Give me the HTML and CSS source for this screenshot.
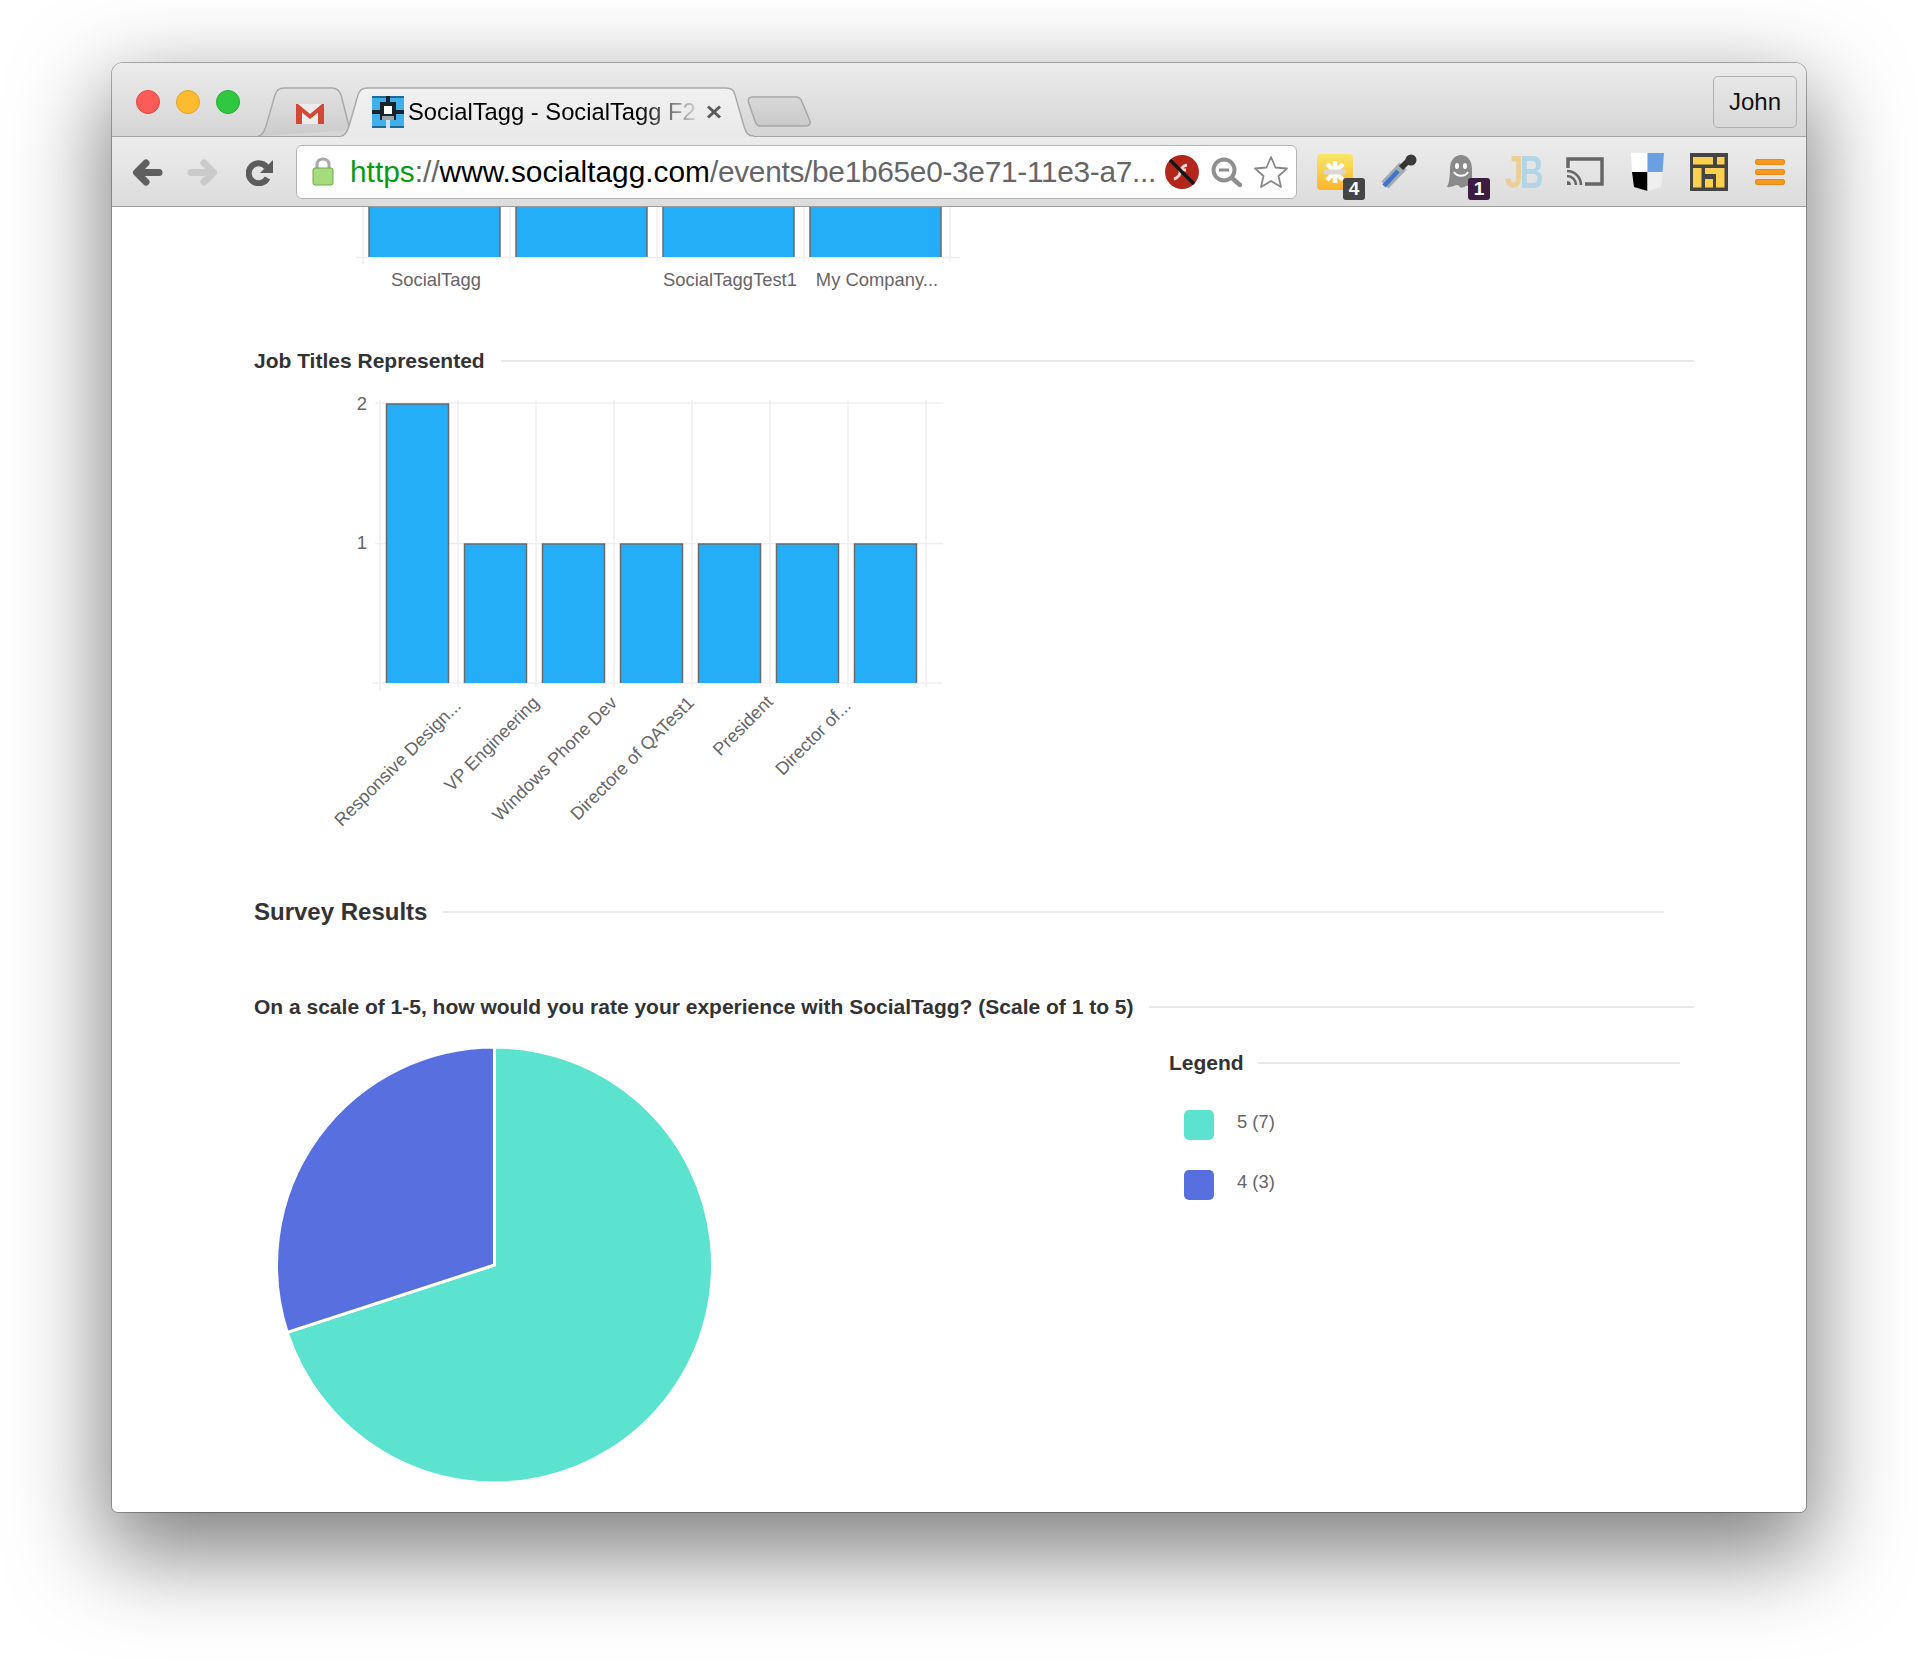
FILE: index.html
```html
<!DOCTYPE html>
<html>
<head>
<title>SocialTagg - SocialTagg F2</title>
<link rel="stylesheet" href="styles.css">
</head>
<body>
<div class="window">

<div class="titlebar">
  <div class="lights">
    <span class="light red"></span>
    <span class="light yellow"></span>
    <span class="light green"></span>
  </div>
  <div class="tab tab-mail">
    <svg class="tab-shape" viewBox="0 0 92 51" preserveAspectRatio="none"><defs><linearGradient id="tg1" x1="0" y1="0" x2="0" y2="1"><stop offset="0" stop-color="#e2e2e2"/><stop offset="1" stop-color="#cbcbcb"/></linearGradient></defs><path d="M0 50C4 50 6 46 8 40L17 8C18.500 3 21 1 26 1H74C78 1 81 3 83 8L92 44" fill="url(#tg1)" stroke="#a9a9a9" stroke-width="1.500"/></svg>
    <svg class="gmail" width="28" height="20" viewBox="0 0 28 20">
      <rect x="0" y="0" width="28" height="20" fill="#ececec"/>
      <path d="M0 20V0H2L14 10 26 0H28V20H22V8.500L14 15 6 8.500V20Z" fill="#d14836"/>
    </svg>
  </div>
  <div class="tab tab-active">
    <svg class="tab-shape" viewBox="0 0 413 51" preserveAspectRatio="none"><defs><linearGradient id="tg2" x1="0" y1="0" x2="0" y2="1"><stop offset="0" stop-color="#f1f1f1"/><stop offset="1" stop-color="#e9e9e9"/></linearGradient></defs><path d="M0 50C4 50 6 46 8 40L17 8C18.500 3 21 1 26 1H385C390 1 393 3 394 8L403 40C405 47 407 50 413 50V51H0Z" fill="url(#tg2)"/><path d="M0 50C4 50 6 46 8 40L17 8C18.500 3 21 1 26 1H385C390 1 393 3 394 8L403 40C405 47 407 50 413 50" fill="none" stroke="#a9a9a9" stroke-width="1.500"/></svg>
    <svg class="favicon" width="32" height="32" viewBox="0 0 16 16" shape-rendering="crispEdges">
      <rect width="16" height="16" fill="#3fb0ea"/>
      <rect x="0" y="0" width="16" height="1" fill="#1d6b94"/>
      <rect x="0" y="15" width="16" height="1" fill="#1d6b94"/>
      <rect x="7" y="0" width="2" height="4" fill="#15232b"/>
      <rect x="0" y="7" width="4" height="2" fill="#15232b"/>
      <rect x="12" y="7" width="4" height="2" fill="#15232b"/>
      <rect x="4" y="3" width="8" height="9" fill="#15232b"/>
      <rect x="6" y="5" width="4" height="4" fill="#fff"/>
      <rect x="5" y="10" width="6" height="2" fill="#9aa6ac"/>
      <rect x="7" y="12" width="2" height="4" fill="#cfe4ef"/>
    </svg>
    <span class="tab-title">SocialTagg - SocialTagg F2</span>
    <svg class="tab-close" width="16" height="14" viewBox="0 0 16 14"><path d="M2 1.500L14 12.500M14 1.500L2 12.500" stroke="#5a5a5a" stroke-width="3"/></svg>
  </div>
  <div class="tab-new">
    <svg width="64" height="31" viewBox="0 0 64 31"><defs><linearGradient id="tg3" x1="0" y1="0" x2="0" y2="1"><stop offset="0" stop-color="#d9d9d9"/><stop offset="1" stop-color="#c9c9c9"/></linearGradient></defs><path d="M5 1H49C52 1 54 3 55 6L63 25C64 28 62 30 59 30H13C10 30 9 28 8 25L1.500 6C1 3 2 1 5 1Z" fill="url(#tg3)" stroke="#a6a6a6" stroke-width="1.500"/></svg>
  </div>
  <div class="user">John</div>
</div>

<div class="toolbar">
  <svg class="nav nav-back" width="31" height="27" viewBox="0 0 31 27"><path d="M27 13.500H6M14 4L4.500 13.500 14 23" fill="none" stroke="#5f5f5f" stroke-width="7" stroke-linecap="round" stroke-linejoin="round"/></svg>
  <svg class="nav nav-fwd" width="31" height="27" viewBox="0 0 31 27"><path d="M4 13.500H25M17 4L26.500 13.500 17 23" fill="none" stroke="#cacaca" stroke-width="7" stroke-linecap="round" stroke-linejoin="round"/></svg>
  <svg class="nav nav-reload" width="28" height="27" viewBox="0 0 28 27"><path d="M20.500 8A10 10 0 1 0 21.500 19" fill="none" stroke="#5c5c5c" stroke-width="6"/><path d="M27 1V14H14Z" fill="#5c5c5c"/></svg>

  <div class="urlbar">
    <svg class="lock" width="22" height="29" viewBox="0 0 22 29"><path d="M5 12V7.500C5 4 7.500 2 11 2S17 4 17 7.500V12" fill="none" stroke="#a8a8a8" stroke-width="3"/><rect x="1" y="11" width="20" height="17" rx="2" fill="#a6dc7c" stroke="#6fa850"/></svg>
    <span class="url"><span class="url-scheme">https</span><span class="url-dim">://</span><span class="url-host">www.socialtagg.com</span><span class="url-dim url-path">/events/be1b65e0-3e71-11e3-a7...</span></span>
    <svg class="url-icon" width="34" height="34" viewBox="0 0 34 34"><circle cx="17" cy="17" r="17" fill="#b3261c"/><path d="M22 10C17 11 16 14 15 18S12 23 9 24M13 15H21" fill="none" stroke="#f1d7d4" stroke-width="3"/><path d="M5 5L29 29" stroke="#161616" stroke-width="3.500"/></svg>
    <svg class="url-icon url-zoom" width="31" height="30" viewBox="0 0 31 30"><circle cx="13" cy="13" r="10.500" fill="none" stroke="#8f8f8f" stroke-width="4"/><path d="M8 13H18" stroke="#8f8f8f" stroke-width="3"/><path d="M21 21L29 28" stroke="#8f8f8f" stroke-width="4.500" stroke-linecap="round"/></svg>
    <svg class="url-icon url-star" width="36" height="34" viewBox="0 0 36 34"><path d="M18 2L22.500 12.500 34 13.500 25.500 21 28 32 18 26 8 32 10.500 21 2 13.500 13.500 12.500Z" fill="#fff" stroke="#8a8a8a" stroke-width="1.800" stroke-linejoin="round"/></svg>
  </div>

  <div class="exts">
    <div class="ext">
      <svg width="36" height="36" viewBox="0 0 36 36"><defs><linearGradient id="yl" x1="0" y1="0" x2="0" y2="1"><stop offset="0" stop-color="#f6e768"/><stop offset="1" stop-color="#fdb42c"/></linearGradient></defs><rect width="36" height="36" rx="4" fill="url(#yl)"/><path d="M18 7V29M10 10L26 26M26 10L10 26" stroke="#fff" stroke-width="4.500"/><path d="M7 18H29" stroke="#d8d8d0" stroke-width="5"/></svg>
      <span class="badge badge-dark">4</span>
    </div>
    <div class="ext">
      <svg width="38" height="36" viewBox="0 0 38 36"><path d="M6 31L24 12" stroke="#a4aab2" stroke-width="10"/><path d="M5 32L19 17" stroke="#3f74cc" stroke-width="4.500"/><path d="M22 14L30 6" stroke="#333" stroke-width="6"/><circle cx="32" cy="6" r="5.500" fill="#3a3a3a"/></svg>
    </div>
    <div class="ext">
      <svg width="27" height="34" viewBox="0 0 27 34"><path d="M3 14C3 5 8 0 14 0S25 5 25 14V27L27 32C24 34 21 30 19 31S14 34 12 31 6 33 0 32C2 28 3 22 3 14Z" fill="#8a8a8a"/><ellipse cx="10" cy="11" rx="2" ry="3" fill="#fff"/><ellipse cx="18" cy="11" rx="2" ry="3" fill="#fff"/><path d="M7 17C10 22 18 22 21 17" fill="none" stroke="#fff" stroke-width="2"/></svg>
      <span class="badge badge-plum">1</span>
    </div>
    <div class="ext"><span class="jb"><span class="jb-j">J</span><span class="jb-b">B</span></span></div>
    <div class="ext">
      <svg width="38" height="29" viewBox="0 0 38 29"><path d="M2 11V2H36V27H19" fill="none" stroke="#666" stroke-width="3.500"/><path d="M1 14A14 14 0 0 1 15 28M1 19A9 9 0 0 1 10 28" fill="none" stroke="#666" stroke-width="2.500"/><path d="M1 24A4 4 0 0 1 5 28H1Z" fill="#666"/></svg>
    </div>
    <div class="ext">
      <svg width="33" height="38" viewBox="0 0 33 38"><path d="M0 0H16.500V19H1Z" fill="#fff"/><path d="M16.500 0H33L31.500 19H16.500Z" fill="#6a9fe2"/><path d="M1 19H16.500V38L3 34Z" fill="#000"/><path d="M16.500 19H31.500L30 34 16.500 38Z" fill="#efefef"/></svg>
    </div>
    <div class="ext ext-hive">
      <svg width="38" height="38" viewBox="0 0 38 38"><rect width="38" height="38" fill="#444"/><g fill="#fbd04f"><rect x="3" y="4" width="20" height="7.500"/><rect x="27" y="4" width="7.500" height="7.500"/><rect x="3" y="15" width="8.500" height="19.500"/><rect x="15" y="15" width="19.500" height="6"/><rect x="15" y="26" width="8" height="8.500"/><rect x="26" y="21" width="8.500" height="13.500"/></g></svg>
    </div>
    <div class="ext ext-menu">
      <div class="menu"><span></span><span></span><span></span></div>
    </div>
  </div>
</div>

<div class="page">
  <svg class="chart chart-top" width="610" height="90" viewBox="355 207 610 90">
    <g class="grid">
      <path d="M363 207V264M510 207V262M657 207V262M804 207V262M950 207V262"/>
      <path d="M356 257.500H960"/>
    </g>
    <path class="bar" d="M369 257V200H500V257"/>
    <path class="bar" d="M516 257V200H647V257"/>
    <path class="bar" d="M663 257V200H794V257"/>
    <path class="bar" d="M810 257V200H941V257"/>
    <text class="tick" x="436" y="286" text-anchor="middle">SocialTagg</text>
    <text class="tick" x="730" y="286" text-anchor="middle">SocialTaggTest1</text>
    <text class="tick" x="877" y="286" text-anchor="middle">My Company...</text>
  </svg>

  <h3 class="rule-head job-head"><span>Job Titles Represented</span></h3>

  <svg class="chart chart-jobs" width="650" height="440" viewBox="320 395 650 440">
    <g class="grid">
      <path d="M380 400V690M458 400V687M536 400V687M614 400V687M692 400V687M770 400V687M848 400V687M926 400V687"/>
      <path d="M375 403H943M375 543.500H943M372 683H942"/>
    </g>
    <path class="bar" d="M386.500 683V404H448.500V683"/>
    <path class="bar" d="M464.500 683V544H526.500V683"/>
    <path class="bar" d="M542.500 683V544H604.500V683"/>
    <path class="bar" d="M620.500 683V544H682.500V683"/>
    <path class="bar" d="M698.500 683V544H760.500V683"/>
    <path class="bar" d="M776.500 683V544H838.500V683"/>
    <path class="bar" d="M854.500 683V544H916.500V683"/>
    <text class="tick" x="367" y="410" text-anchor="end">2</text>
    <text class="tick" x="367" y="549" text-anchor="end">1</text>
    <text class="tick tick-slant" transform="translate(462 707) rotate(-45)" text-anchor="end">Responsive Design...</text>
    <text class="tick tick-slant" transform="translate(540 704) rotate(-45)" text-anchor="end">VP Engineering</text>
    <text class="tick tick-slant" transform="translate(618 704) rotate(-45)" text-anchor="end">Windows Phone Dev</text>
    <text class="tick tick-slant" transform="translate(695 704) rotate(-45)" text-anchor="end">Directore of QATest1</text>
    <text class="tick tick-slant" transform="translate(774 703) rotate(-45)" text-anchor="end">President</text>
    <text class="tick tick-slant" transform="translate(852 707) rotate(-45)" text-anchor="end">Director of...</text>
  </svg>

  <h2 class="rule-head survey-head"><span>Survey Results</span></h2>

  <h3 class="rule-head question-head"><span>On a scale of 1-5, how would you rate your experience with SocialTagg? (Scale of 1 to 5)</span></h3>

  <div class="results">
    <svg class="chart pie" width="450" height="450" viewBox="270 1040 450 450">
      <path d="M494.500 1265V1047A218 218 0 1 1 287.200 1332.400Z" fill="#5ce3d0" stroke="#fff" stroke-width="3"/>
      <path d="M494.500 1265L287.200 1332.400A218 218 0 0 1 494.500 1047Z" fill="#586fe0" stroke="#fff" stroke-width="3"/>
    </svg>
    <div class="legend">
      <h4 class="rule-head legend-head"><span>Legend</span></h4>
      <div class="legend-row"><span class="swatch swatch-teal"></span><span class="legend-label">5 (7)</span></div>
      <div class="legend-row"><span class="swatch swatch-blue"></span><span class="legend-label">4 (3)</span></div>
    </div>
  </div>
</div>

</div>
</body>
</html>
```

FILE: styles.css
```css
html,body{
margin:0;
background:#fff;}
body{
width:1918px;
height:1672px;
overflow:hidden;
padding:63px 0 0 112px;
box-sizing:border-box;
font-family:"Liberation Sans",Arial,sans-serif;}

.window{
width:1694px;
height:1449px;
display:flex;
flex-direction:column;
border-radius:11px 11px 6px 6px;
overflow:hidden;
box-shadow:0 0 0 1px rgba(0,0,0,.28),0 34px 90px 8px rgba(0,0,0,.5);}

/* title bar */
.titlebar{
height:74px;
flex:none;
box-sizing:border-box;
display:flex;
align-items:flex-end;
padding-left:24px;
background:linear-gradient(#ececec,#d5d5d5);
border-bottom:1px solid #a4a4a4;}
.lights{
display:flex;
gap:16px;
align-self:flex-start;
margin-top:27px;}
.light{
width:24px;
height:24px;
border-radius:50%;
box-sizing:border-box;}
.red{background:#fc5b57;border:1px solid #e2463f;}
.yellow{background:#fdbb2f;border:1px solid #e1a126;}
.green{background:#2fc840;border:1px solid #26aa34;}

.tab{
position:relative;
height:50px;
margin-bottom:-1px;
display:flex;
align-items:center;
box-sizing:border-box;}
.tab-shape{
position:absolute;
left:0;
top:0;
width:100%;
height:100%;}
.tab-mail{
width:92px;
margin-left:18px;
padding:0 0 0 38px;}
.gmail{position:relative;margin-top:4px;}
.tab-active{
width:413px;
margin-left:-9px;
padding-left:31px;
z-index:2;}
.favicon{position:relative;margin-top:-1px;flex:none;}
.tab-title{
position:relative;
margin-left:4px;
font-size:23.75px;
white-space:nowrap;
color:#000;
-webkit-mask-image:linear-gradient(to right,#000 80%,rgba(0,0,0,.12) 100%);
mask-image:linear-gradient(to right,#000 80%,rgba(0,0,0,.12) 100%);}
.tab-close{position:relative;margin-left:10px;flex:none;}
.tab-new{
margin:0 0 9px -7px;
height:31px;
z-index:1;}
.tab-new svg{display:block;}
.user{
margin:0 9px 8px auto;
align-self:flex-end;
width:84px;
height:52px;
box-sizing:border-box;
border:1px solid #b0b0b0;
border-radius:5px;
font-size:24px;
line-height:50px;
text-align:center;
color:#111;}

/* toolbar */
.toolbar{
height:70px;
flex:none;
box-sizing:border-box;
display:flex;
align-items:center;
padding-left:20px;
background:linear-gradient(#ececec,#dcdcdc);
border-bottom:1px solid #9c9c9c;}
.nav{flex:none;margin-top:1px;}
.nav-fwd{margin-left:24px;}
.nav-reload{margin-left:28px;}
.urlbar{
width:1001px;
height:54px;
flex:none;
margin-left:22px;
box-sizing:border-box;
display:flex;
align-items:center;
padding-left:15px;
background:#fff;
border:1px solid #b4b4b4;
border-radius:6px;}
.lock{flex:none;}
.url{
width:815px;
flex:none;
margin-left:16px;
font-size:29.85px;
white-space:nowrap;
color:#000;}
.url-scheme{color:#0c9a12;}
.url-dim{color:#666;}
.url-path{letter-spacing:-.3px;}
.url-host{color:#000;}
.url-icon{flex:none;}
.url-zoom{margin-left:12px;}
.url-star{margin-left:11px;}

.exts{
display:flex;
margin-left:7px;}
.ext{
position:relative;
width:62.5px;
height:40px;
display:flex;
align-items:center;
justify-content:center;}
.ext-hive{left:-1px;}
.ext-menu{left:-3px;}
.badge{
position:absolute;
top:26px;
left:39px;
width:22px;
height:22px;
border-radius:3px;
font-size:19px;
font-weight:bold;
line-height:22px;
text-align:center;
color:#fff;}
.badge-dark{background:#454545;}
.badge-plum{background:#3c1d40;}
.jb{
font-size:46px;
font-weight:bold;
letter-spacing:-5px;
line-height:40px;
transform:scaleX(.72);}
.jb-j{color:#ecce97;}
.jb-b{color:#b2d5e5;}
.menu{
display:flex;
flex-direction:column;
gap:4px;}
.menu span{
display:block;
width:30px;
height:6px;
background:#f79a1f;
border-radius:3px;
box-shadow:inset 0 0 0 1px #e48a1c;}

/* page */
.page{
flex:1;
min-height:0;
overflow:hidden;
background:#fff;
padding-left:142px;}
.chart{display:block;}
.chart-top{margin-left:101px;}
.chart-jobs{margin:22px 0 0 66px;}
.grid path{
fill:none;
stroke:#efefef;
stroke-width:1.500;}
.bar{
fill:#25aef8;
stroke:#6a6a6a;
stroke-width:1.500;}
.tick{
font-size:18.4px;
fill:#666;}
.tick-slant{font-size:18px;}

.rule-head{
display:flex;
align-items:center;
margin:0;
font-weight:bold;
color:#333;
font-size:21px;
line-height:24px;
white-space:nowrap;}
.rule-head::after{
content:"";
flex:1;
height:2px;
margin-left:16px;
background:#e9e9e9;}
.job-head{margin:52px 112px 0 0;}
.survey-head{
margin:62px 142px 0 0;
font-size:24px;
line-height:30px;}
.question-head{margin:68px 112px 0 0;}
.legend-head::after{margin-left:14px;}

.results{display:flex;}
.pie{margin:21px 0 0 16px;flex:none;}
.legend{
width:511px;
margin:32px 0 0 449px;}
.legend-row{
display:flex;
margin-top:35px;
padding-left:15px;}
.legend-row + .legend-row{margin-top:30px;}
.swatch{
width:30px;
height:30px;
border-radius:5px;
flex:none;}
.swatch-teal{background:#5ce3d0;}
.swatch-blue{background:#586fe0;}
.legend-label{
margin-left:23px;
font-size:18.4px;
line-height:24px;
color:#666;}
```
